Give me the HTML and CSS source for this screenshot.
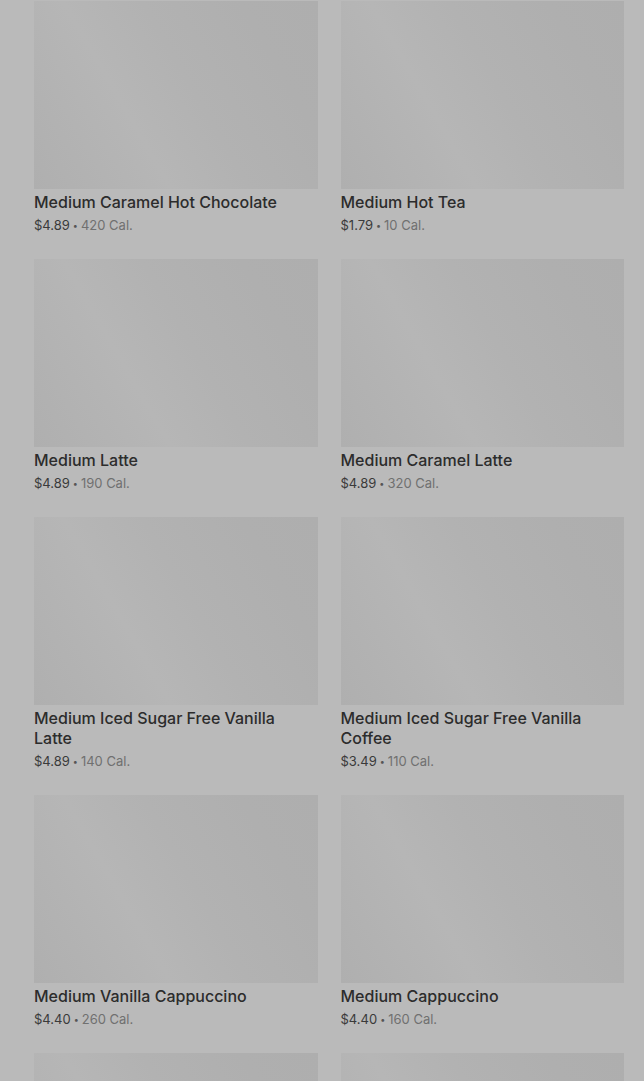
FILE: index.html
```html
<!DOCTYPE html>
<html lang="en">
<head>
<meta charset="utf-8">
<title>Menu</title>
<link rel="stylesheet" href="styles.css">
</head>
<body>
<main class="grid">
  <div class="card"><div class="thumb"></div><div class="title">Medium Caramel Hot Chocolate</div><div class="meta"><span class="price">$4.89</span><span class="dot">•</span><span class="cal">420 Cal.</span></div></div>
  <div class="card"><div class="thumb"></div><div class="title">Medium Hot Tea</div><div class="meta"><span class="price">$1.79</span><span class="dot">•</span><span class="cal">10 Cal.</span></div></div>
  <div class="card"><div class="thumb"></div><div class="title">Medium Latte</div><div class="meta"><span class="price">$4.89</span><span class="dot">•</span><span class="cal">190 Cal.</span></div></div>
  <div class="card"><div class="thumb"></div><div class="title">Medium Caramel Latte</div><div class="meta"><span class="price">$4.89</span><span class="dot">•</span><span class="cal">320 Cal.</span></div></div>
  <div class="card"><div class="thumb"></div><div class="title">Medium Iced Sugar Free Vanilla Latte</div><div class="meta"><span class="price">$4.89</span><span class="dot">•</span><span class="cal">140 Cal.</span></div></div>
  <div class="card"><div class="thumb"></div><div class="title">Medium Iced Sugar Free Vanilla Coffee</div><div class="meta"><span class="price">$3.49</span><span class="dot">•</span><span class="cal">110 Cal.</span></div></div>
  <div class="card"><div class="thumb"></div><div class="title">Medium Vanilla Cappuccino</div><div class="meta"><span class="price">$4.40</span><span class="dot">•</span><span class="cal">260 Cal.</span></div></div>
  <div class="card"><div class="thumb"></div><div class="title">Medium Cappuccino</div><div class="meta"><span class="price">$4.40</span><span class="dot">•</span><span class="cal">160 Cal.</span></div></div>
  <div class="card"><div class="thumb"></div></div>
  <div class="card"><div class="thumb"></div></div>
</main>
</body>
</html>
```

FILE: styles.css
```css
html, body {
  margin: 0;
  padding: 0;
  background: #bababa;
}
body {
  font-family: Inter, "Liberation Sans", sans-serif;
  overflow: hidden;
  height: 1081px;
}
.grid {
  display: grid;
  grid-template-columns: 1fr 1fr;
  column-gap: 23px;
  row-gap: 24px;
  padding: 1px 20px 0 34px;
}
.card {
  display: flex;
  flex-direction: column;
}
.thumb {
  height: 188px;
  background: linear-gradient(60deg, #afafaf 0%, #b2b2b2 15%, #b6b6b6 35%, #b2b2b2 55%, #afafaf 80%, #aeaeae 100%);
}
.title {
  margin-top: 3px;
  padding-right: 4px;
  font-size: 16px;
  line-height: 20px;
  font-weight: 500;
  color: #2c2c2c;
}
.meta {
  margin-top: 3px;
  height: 20px;
  font-size: 13px;
  line-height: 20px;
  color: #3a3a3a;
}
.dot {
  margin: 0 3px;
  font-size: 9px;
  line-height: 1;
  color: #555555;
  vertical-align: 1px;
}
.cal {
  color: #707070;
}
```
